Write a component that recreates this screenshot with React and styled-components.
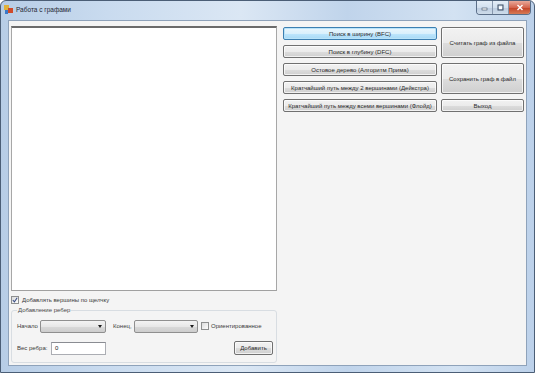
import React from 'react'
import styled, { createGlobalStyle, css } from 'styled-components'

const GlobalStyle = createGlobalStyle`
  html, body {
    margin: 0;
    padding: 0;
    background: #ffffff;
  }
  body {
    font-family: 'Liberation Sans', Arial, sans-serif;
  }
`

const Window = styled.div`
  box-sizing: border-box;
  width: 535px;
  height: 373px;
  display: flex;
  flex-direction: column;
  border: 1px solid #4b5e76;
  border-radius: 6px 6px 0 0;
  background: linear-gradient(
    to right,
    #b7cde6 0%,
    #c9dbef 20%,
    #dbe7f4 45%,
    #c0d4eb 65%,
    #d3e2f2 85%,
    #bcd1ea 100%
  );
  overflow: hidden;
`

const TitleBar = styled.div`
  height: 18px;
  display: flex;
  align-items: flex-start;
  padding-left: 3px;
`

const AppIcon = styled.svg`
  width: 9px;
  height: 9px;
  margin-top: 4px;
`

const Title = styled.span`
  margin-left: 3px;
  margin-top: 5px;
  font-size: 6.5px;
  color: #1e2733;
`

const CaptionButtons = styled.div`
  margin-left: auto;
  margin-right: 3px;
  display: flex;
  height: 13px;
  border: 1px solid #5b6e88;
  border-top: none;
  border-radius: 0 0 4px 4px;
  overflow: hidden;
`

const CaptionButton = styled.div`
  width: ${p => (p.close ? '21px' : '15px')};
  height: 13px;
  display: flex;
  align-items: center;
  justify-content: center;
  border-left: ${p => (p.first ? 'none' : '1px solid #8797ad')};
  background: ${p =>
    p.close
      ? 'linear-gradient(#e9a99a, #d4654e 50%, #c24126 51%, #d77a55)'
      : 'linear-gradient(#e4edf7, #d3e0ee 50%, #bccce0 51%, #cddbea)'};
`

const Client = styled.div`
  flex: 1;
  margin: 1px 7px 6px 7px;
  background: #f4f4f4;
  border: 1px solid #8ea2ba;
  display: grid;
  grid-template-columns: 266px 241px;
  column-gap: 6px;
  padding: 5px 0 0 2px;
  align-items: start;
`

const LeftColumn = styled.div`
  display: flex;
  flex-direction: column;
`

const Canvas = styled.div`
  box-sizing: border-box;
  height: 265px;
  background: #ffffff;
  border-style: solid;
  border-width: 2px 1px 1px 1px;
  border-color: #6b6b6b #a7a7a7 #a0a0a0 #a7a7a7;
`

const CheckRow = styled.label`
  display: flex;
  align-items: center;
  gap: 3px;
  font-size: 6px;
  color: #3a3a3a;
  margin-top: 4px;
  height: 9px;
`

const Box = styled.span`
  box-sizing: border-box;
  width: 8px;
  height: 8px;
  border: 1px solid #8e8f8f;
  background: linear-gradient(135deg, #dcdcdc, #fdfdfd);
  display: inline-flex;
  align-items: center;
  justify-content: center;
  flex-shrink: 0;
`

const Group = styled.fieldset`
  margin: 3px 0 0 0;
  padding: 6px 3px 7px 5px;
  border: 1px solid #d8dde2;
  border-radius: 3px;
  display: flex;
  flex-direction: column;
  gap: 8px;
`

const Legend = styled.legend`
  font-size: 6px;
  color: #4a4a4a;
  padding: 0 1px;
  margin-left: 0;
`

const FormRow = styled.div`
  display: flex;
  align-items: center;
  height: 14px;
`

const Label = styled.span`
  font-size: 6px;
  color: #3a3a3a;
  width: ${p => p.w || 'auto'};
  margin-left: ${p => p.ml || '0'};
  flex-shrink: 0;
`

const Combo = styled.div`
  box-sizing: border-box;
  width: ${p => p.w};
  height: 13px;
  border: 1px solid #8f8f8f;
  border-radius: 2px;
  background: linear-gradient(#f3f3f3, #e7e7e7 50%, #d9d9d9 51%, #cdcdcd);
  display: flex;
  align-items: center;
  justify-content: flex-end;
  padding-right: 3px;
  margin-right: ${p => p.mr || '0'};
`

const Arrow = styled.span`
  width: 0;
  height: 0;
  border-left: 2px solid transparent;
  border-right: 2px solid transparent;
  border-top: 3px solid #1c1c1c;
`

const TextInput = styled.div`
  box-sizing: border-box;
  width: 55px;
  height: 13px;
  border: 1px solid #abadb3;
  border-top-color: #8a8c92;
  background: #ffffff;
  font-size: 6px;
  color: #1a1a1a;
  padding-left: 3px;
  display: flex;
  align-items: center;
`

const Button = styled.div`
  box-sizing: border-box;
  display: flex;
  align-items: center;
  justify-content: center;
  text-align: center;
  font-size: 6px;
  color: #2a2a2a;
  border: 1px solid #707070;
  border-radius: 2px;
  white-space: nowrap;
  background: linear-gradient(#f2f2f2, #ebebeb 50%, #dddddd 51%, #cfcfcf);
  box-shadow: inset 0 0 0 1px rgba(255, 255, 255, 0.7);
  grid-column: ${p => p.col || 'auto'};
  grid-row: ${p => p.row || 'auto'};
  ${p =>
    p.primary &&
    css`
      border-color: #3c7fb1;
      background: linear-gradient(#eaf6fd, #d9f0fc 50%, #bee6fd 51%, #a7d9f5);
      box-shadow: inset 0 0 0 1px #b9e3f9;
    `}
`

const SmallButton = styled(Button)`
  width: 39px;
  height: 14px;
  margin-left: auto;
`

const ButtonGrid = styled.div`
  display: grid;
  grid-template-columns: 154px 83px;
  grid-template-rows: repeat(5, 13px);
  column-gap: 4px;
  row-gap: 5px;
  margin-top: 1px;
`

const actions = [
  { text: 'Поиск в ширину (BFC)', primary: true },
  { text: 'Поиск в глубину (DFC)' },
  { text: 'Остовое дерево (Алгоритм Прима)' },
  { text: 'Кратчайший путь между 2 вершинами (Дейкстра)' },
  { text: 'Кратчайший путь между всеми вершинами (Флойд)' }
]

const App = () => {
  return (
    <>
      <GlobalStyle />
      <Window>
        <TitleBar>
          <AppIcon viewBox="0 0 9 9">
            <rect x="0" y="0" width="5" height="5" fill="#e0b23a" />
            <rect x="4" y="3" width="5" height="5" fill="#d04a2a" />
            <rect x="1" y="5" width="3" height="4" fill="#3b78c8" />
          </AppIcon>
          <Title>Работа с графами</Title>
          <CaptionButtons>
            <CaptionButton first>
              <svg width="7" height="7" viewBox="0 0 7 7">
                <rect x="1" y="4" width="5" height="2" fill="#ffffff" stroke="#3a4a60" strokeWidth="0.6" />
              </svg>
            </CaptionButton>
            <CaptionButton>
              <svg width="7" height="7" viewBox="0 0 7 7">
                <rect x="1" y="1" width="5" height="5" fill="none" stroke="#3a4a60" strokeWidth="1" />
                <rect x="2" y="2.5" width="3" height="2.5" fill="#ffffff" />
              </svg>
            </CaptionButton>
            <CaptionButton close>
              <svg width="8" height="7" viewBox="0 0 8 7">
                <path d="M1.5 1 L6.5 6 M6.5 1 L1.5 6" stroke="#ffffff" strokeWidth="1.4" />
              </svg>
            </CaptionButton>
          </CaptionButtons>
        </TitleBar>
        <Client>
          <LeftColumn>
            <Canvas />
            <CheckRow>
              <Box>
                <svg width="6" height="6" viewBox="0 0 6 6">
                  <path d="M0.8 3 L2.4 4.8 L5.2 0.8" stroke="#3b4f86" strokeWidth="1.1" fill="none" />
                </svg>
              </Box>
              Добавлять вершины по щелчку
            </CheckRow>
            <Group>
              <Legend>Добавление ребер</Legend>
              <FormRow>
                <Label w="23px">Начало</Label>
                <Combo w="66px" mr="7px">
                  <Arrow />
                </Combo>
                <Label w="21px">Конец,</Label>
                <Combo w="64px" mr="3px">
                  <Arrow />
                </Combo>
                <Box />
                <Label ml="2px">Ориентированное</Label>
              </FormRow>
              <FormRow>
                <Label w="34px">Вес ребра:</Label>
                <TextInput>0</TextInput>
                <SmallButton>Добавить</SmallButton>
              </FormRow>
            </Group>
          </LeftColumn>
          <ButtonGrid>
            {actions.map((a, i) => (
              <Button key={a.text} col="1" row={String(i + 1)} primary={a.primary}>
                {a.text}
              </Button>
            ))}
            <Button col="2" row="1 / span 2">Считать граф из файла</Button>
            <Button col="2" row="3 / span 2">Сохранить граф в файл</Button>
            <Button col="2" row="5">Выход</Button>
          </ButtonGrid>
        </Client>
      </Window>
    </>
  )
}

export default App
